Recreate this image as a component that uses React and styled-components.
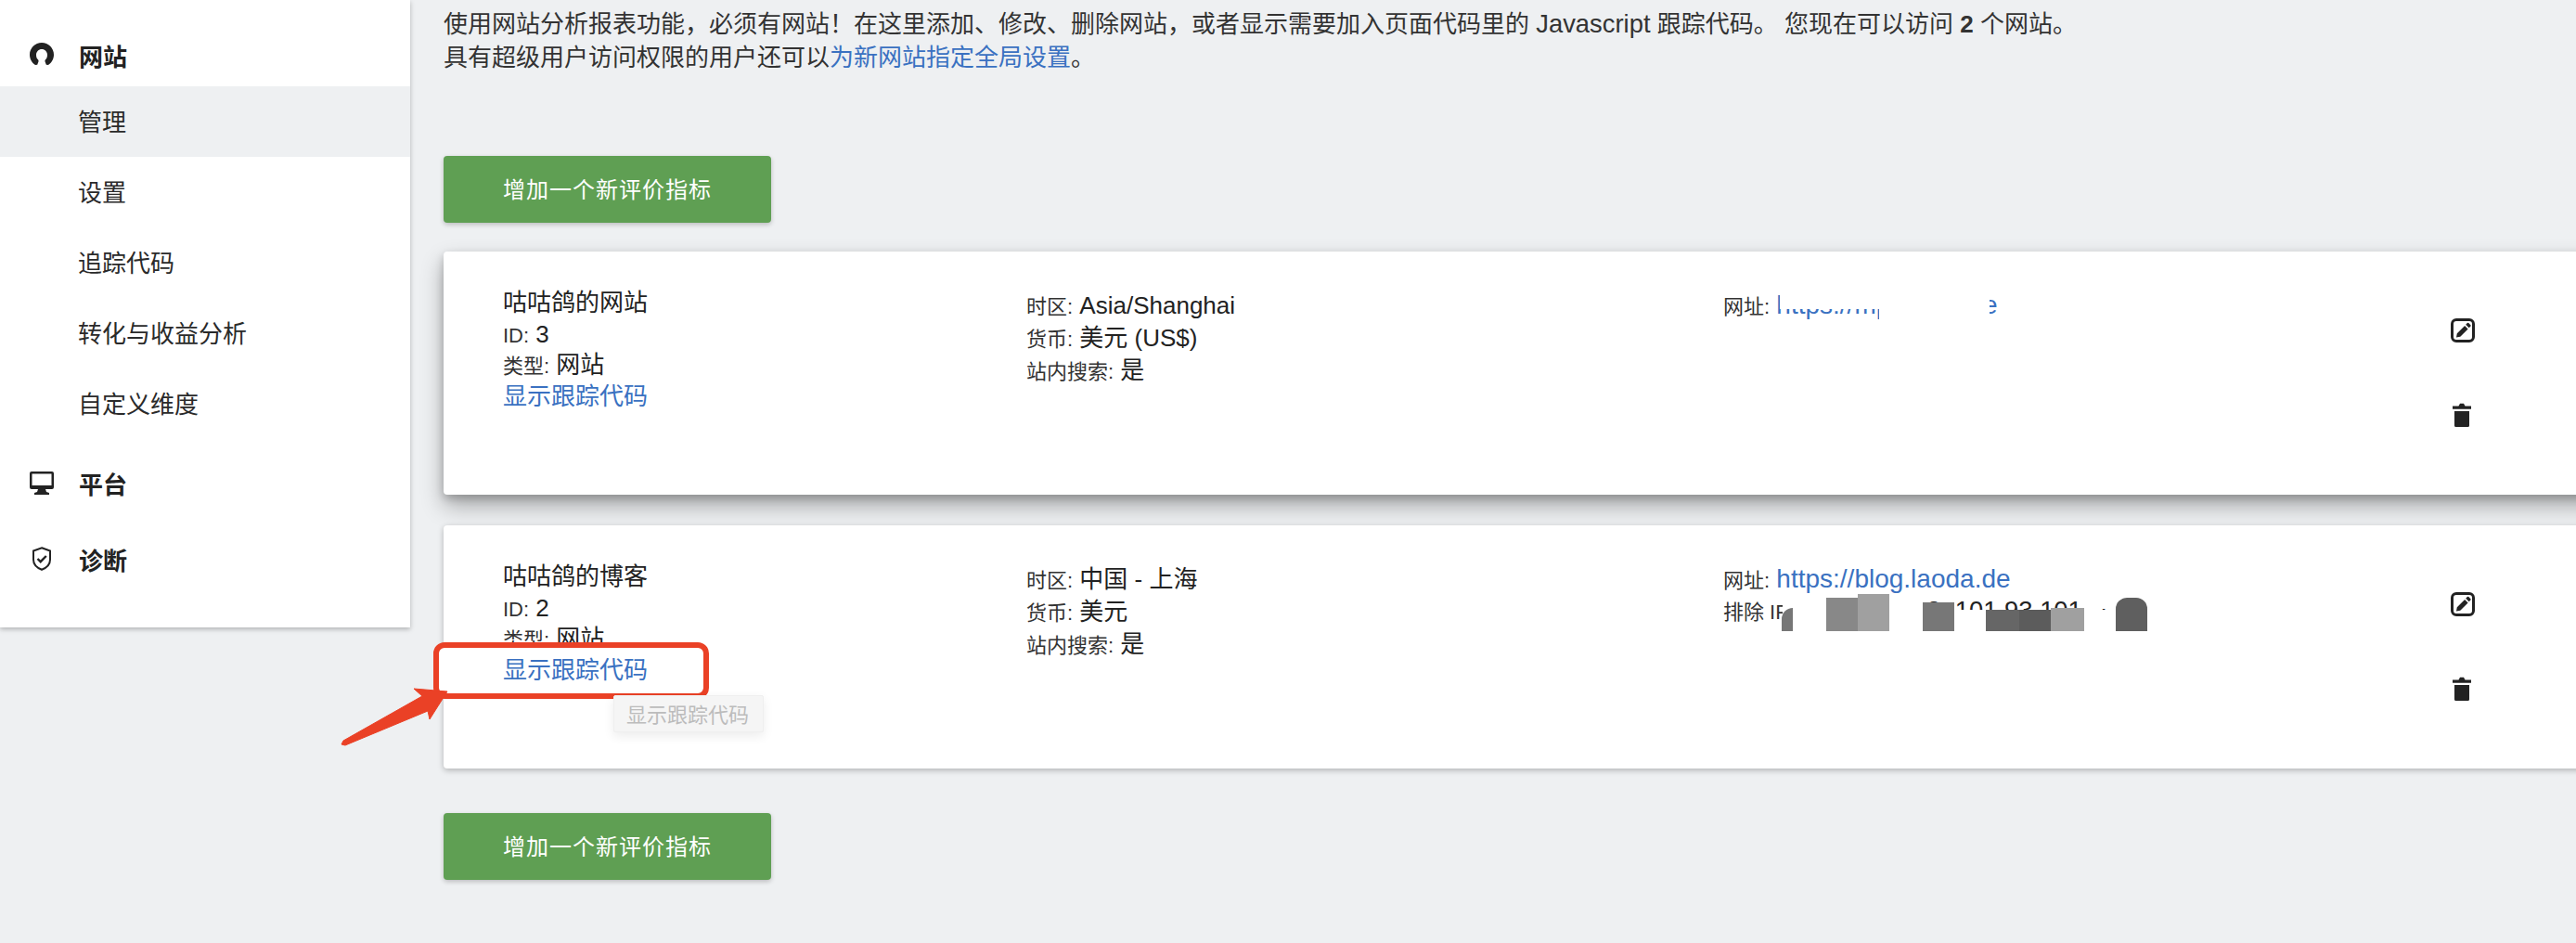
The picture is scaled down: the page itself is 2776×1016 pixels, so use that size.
import React from "react";
import styled, { createGlobalStyle } from "styled-components";

const Global = createGlobalStyle`
  html, body { margin: 0; padding: 0; background: #eef0f2; }
  body { font-family: "Liberation Sans", "Noto Sans CJK SC", sans-serif; color: #212121; }
  #root { width: 2776px; height: 1016px; overflow: hidden; }
`;

const Page = styled.div`
  position: relative;
  display: flex;
  align-items: flex-start;
  width: 2776px;
  height: 1016px;
  overflow: hidden;
  background: #eef0f2;
`;

const Sidebar = styled.nav`
  flex: none;
  width: 442px;
  height: 676px;
  padding-top: 22px;
  box-sizing: border-box;
  background: #fff;
  box-shadow: 0 2px 5px rgba(0, 0, 0, 0.26);
`;

const GroupHead = styled.div`
  display: flex;
  align-items: center;
  box-sizing: border-box;
  height: ${(p) => p.$h || 71}px;
  margin-top: ${(p) => p.$mt || 0}px;
  padding-top: ${(p) => p.$pt || 0}px;
  font-size: 26px;
  font-weight: 600;
  color: #222;
`;

const IconSlot = styled.span`
  display: flex;
  justify-content: center;
  width: 26px;
  margin: 0 27px 0 32px;
  color: #222;
`;

const NavItem = styled.div`
  display: flex;
  align-items: center;
  box-sizing: border-box;
  height: 76px;
  padding: 0 0 3px 84px;
  font-size: 26px;
  color: #2a2a2a;
  background: ${(p) => (p.$active ? "#eef0f2" : "transparent")};
`;

const Main = styled.main`
  flex: none;
  width: 2334px;
  padding: 9px 0 0 36px;
  box-sizing: border-box;
`;

const Intro = styled.p`
  margin: 0;
  font-size: 26px;
  line-height: 35.5px;
  color: #333;
  white-space: nowrap;
  b { font-weight: 700; }
`;

const Latin = styled.span`
  font-size: 27.4px;
  line-height: 1;
`;

const Link = styled.a`
  color: #3a71c1;
  text-decoration: none;
`;

const UrlLink = styled(Link)`
  font-size: 28px;
  line-height: 1;
`;

const AddButton = styled.div`
  display: flex;
  align-items: center;
  width: 353px;
  height: 72px;
  padding: 0 0 3px 64px;
  box-sizing: border-box;
  margin-top: ${(p) => p.$mt}px;
  border-radius: 4px;
  background: #5f9f53;
  color: #fff;
  font-size: 24px;
  letter-spacing: 1px;
  box-shadow: 0 2px 5px rgba(0, 0, 0, 0.22);
`;

const Card = styled.section`
  display: grid;
  grid-template-columns: 564px 751px 784px 60px;
  width: 2400px;
  height: 262px;
  padding: 40px 0 0 64px;
  box-sizing: border-box;
  margin-top: ${(p) => p.$mt}px;
  border-radius: 4px;
  background: #fff;
  box-shadow: ${(p) =>
    p.$raised
      ? "0 12px 24px rgba(0,0,0,0.3), 0 4px 10px rgba(0,0,0,0.2)"
      : "0 2px 6px rgba(0,0,0,0.26)"};
`;

const Column = styled.div`
  font-size: 26px;
  padding-top: ${(p) => p.$pt || 0}px;
  color: #222;
  white-space: nowrap;
`;

const Line = styled.div`
  height: ${(p) => p.$h || 33.5}px;
  line-height: 30px;
`;

const Label = styled.span`
  font-size: 22px;
  color: #333;
`;

const Actions = styled.div`
  display: flex;
  flex-direction: column;
  align-items: flex-start;
  gap: 65px;
  padding-top: 32px;
  color: #222;
`;

const Tooltip = styled.div`
  position: absolute;
  left: 661px;
  top: 749px;
  z-index: 3;
  width: 162px;
  height: 40px;
  padding: 0 2px 3px 0;
  display: flex;
  align-items: center;
  justify-content: center;
  font-size: 22px;
  color: #bcbcbc;
  background: #f5f5f5;
  border: 1px solid #efefef;
  box-sizing: border-box;
  border-radius: 2px;
  box-shadow: 0 4px 12px rgba(0, 0, 0, 0.08);
`;

const Highlight = styled.div`
  position: absolute;
  left: 467px;
  top: 692px;
  z-index: 2;
  width: 297px;
  height: 61px;
  box-sizing: border-box;
  border: 6px solid #ea4126;
  border-radius: 12px;
  background: #fff;
`;

const LinkOverlay = styled.div`
  position: absolute;
  left: 542px;
  top: 705px;
  z-index: 3;
  font-size: 26px;
  line-height: 34px;
`;

const ArrowSvg = styled.svg`
  position: absolute;
  left: 360px;
  top: 735px;
  z-index: 4;
`;

const Patch = styled.div`
  position: absolute;
  z-index: 2;
  left: ${(p) => p.$x}px;
  top: ${(p) => p.$y}px;
  width: ${(p) => p.$w}px;
  height: ${(p) => p.$h}px;
  background: ${(p) => p.$c};
  border-radius: ${(p) => p.$r || "0"};
`;

const WebsiteIcon = () => (
  <svg width="26" height="26" viewBox="0 0 26 26">
    <path
      fill="currentColor"
      d="M13 0C5.800 0 0 5.800 0 13c0 4.600 2.400 8.700 6 11l2.200-.2 1.300-3.600c.2-1-.1-1.700-1-2.500C7.300 16.500 7 14.800 7 13c0-3.300 2.700-6 6-6s6 2.700 6 6c0 1.800-.3 3.500-1.500 4.700-.9.8-1.200 1.500-1 2.500l1.300 3.600 2.200.2c3.600-2.300 6-6.400 6-11C26 5.800 20.200 0 13 0z"
    />
  </svg>
);

const MonitorIcon = () => (
  <svg width="26" height="25" viewBox="0 0 26 25">
    <path
      fill="currentColor"
      d="M2 0h22a2 2 0 0 1 2 2v15a2 2 0 0 1-2 2h-7l1 3 3 1v2H5v-2l3-1 1-3H2a2 2 0 0 1-2-2V2a2 2 0 0 1 2-2zm.5 2.500V15h21V2.500z"
    />
  </svg>
);

const ShieldIcon = () => (
  <svg width="20" height="26" viewBox="0 0 20 26" fill="none" stroke="currentColor" strokeWidth="2">
    <path d="M10 1.200 19 4.500V14c0 5-4 8.800-9 10.800C5 22.800 1 19 1 14V4.500z" />
    <path d="M5.500 13l3.200 3.200L14.800 10" strokeWidth="2.400" />
  </svg>
);

const EditIcon = () => (
  <svg width="26" height="26" viewBox="0 0 26 26" style={{ display: "block" }}>
    <rect x="1.500" y="1.500" width="23" height="23" rx="4.500" fill="none" stroke="currentColor" strokeWidth="3" />
    <path fill="currentColor" d="M6 20.500l.8-4.300 8.300-8.300 3.500 3.500-8.300 8.300zM16.200 6.800l1.700-1.700a1 1 0 0 1 1.400 0l2.100 2.100a1 1 0 0 1 0 1.400l-1.700 1.700z" />
  </svg>
);

const TrashIcon = () => (
  <svg width="26" height="26" viewBox="0 0 26 26" style={{ display: "block" }}>
    <path fill="currentColor" d="M2 3.500h6.500L10 .8h4l1.500 2.700H22v3.200H2zM4 9h16v15.500a1.500 1.500 0 0 1-1.500 1.500h-13A1.500 1.500 0 0 1 4 24.500z" />
  </svg>
);

const sites = [
  { name: "咕咕鸽的网站", id: 3, tz: "Asia/Shanghai", cur: "美元 (US$)", url: "https://mp.laoda.de", raised: true, mt: 31 },
  { name: "咕咕鸽的博客", id: 2, tz: "中国 - 上海", cur: "美元", url: "https://blog.laoda.de", ip: "10.43.7, 112. 101.93.101. 1", mt: 33 },
];

const SiteCard = ({ s }) => (
  <Card $raised={s.raised} $mt={s.mt}>
    <Column>
      <Line>{s.name}</Line>
      <Line><Label>ID:</Label> {s.id}</Line>
      <Line><Label>类型:</Label> 网站</Line>
      <Line><Link>显示跟踪代码</Link></Line>
    </Column>
    <Column $pt={3}>
      <Line $h={35}><Label>时区:</Label> {s.tz}</Line>
      <Line $h={35}><Label>货币:</Label> {s.cur}</Line>
      <Line $h={35}><Label>站内搜索:</Label> 是</Line>
    </Column>
    <Column $pt={3}>
      <Line><Label>网址:</Label> <UrlLink>{s.url}</UrlLink></Line>
      {s.ip && <Line><Label>排除 IP:</Label> <Latin>{s.ip}</Latin></Line>}
    </Column>
    <Actions>
      <EditIcon />
      <TrashIcon />
    </Actions>
  </Card>
);

const patches = [
  { $x: 1918, $y: 296, $w: 226, $h: 37, $c: "#fff" },
  { $x: 2025, $y: 333, $w: 119, $h: 16, $c: "#fff" },
  { $x: 1921, $y: 644, $w: 151, $h: 38, $c: "#fff" },
  { $x: 2106, $y: 657, $w: 176, $h: 25, $c: "#fff" },
  { $x: 2246, $y: 644, $w: 34, $h: 12, $c: "#fff" },
  { $x: 1920, $y: 655, $w: 12, $h: 25, $c: "#777", $r: "12px 0 0 0" },
  { $x: 1968, $y: 644, $w: 34, $h: 36, $c: "#888" },
  { $x: 2002, $y: 640, $w: 34, $h: 40, $c: "#a0a0a0" },
  { $x: 2072, $y: 649, $w: 34, $h: 31, $c: "#777" },
  { $x: 2140, $y: 657, $w: 36, $h: 23, $c: "#666" },
  { $x: 2176, $y: 657, $w: 34, $h: 23, $c: "#5c5c5c" },
  { $x: 2210, $y: 655, $w: 36, $h: 25, $c: "#a0a0a0" },
  { $x: 2280, $y: 644, $w: 34, $h: 36, $c: "#5f5f5f", $r: "12px 12px 0 0" },
];

export default function App() {
  return (
    <>
      <Global />
      <Page>
        <Sidebar>
          <GroupHead $pt={3}>
            <IconSlot><WebsiteIcon /></IconSlot>网站
          </GroupHead>
          <NavItem $active>管理</NavItem>
          <NavItem>设置</NavItem>
          <NavItem>追踪代码</NavItem>
          <NavItem>转化与收益分析</NavItem>
          <NavItem>自定义维度</NavItem>
          <GroupHead $h={82} $mt={6}>
            <IconSlot><MonitorIcon /></IconSlot>平台
          </GroupHead>
          <GroupHead $h={82}>
            <IconSlot><ShieldIcon /></IconSlot>诊断
          </GroupHead>
        </Sidebar>
        <Main>
          <Intro>使用网站分析报表功能，必须有网站！在这里添加、修改、删除网站，或者显示需要加入页面代码里的 <Latin>Javascript</Latin> 跟踪代码。 您现在可以访问 <b>2</b> 个网站。</Intro>
          <Intro>具有超级用户访问权限的用户还可以<Link>为新网站指定全局设置</Link>。</Intro>
          <AddButton $mt={88}>增加一个新评价指标</AddButton>
          {sites.map((s) => (
            <SiteCard key={s.id} s={s} />
          ))}
          <AddButton $mt={48}>增加一个新评价指标</AddButton>
        </Main>
        {patches.map((p, i) => (
          <Patch key={i} {...p} />
        ))}
        <Highlight />
        <LinkOverlay><Link>显示跟踪代码</Link></LinkOverlay>
        <Tooltip>显示跟踪代码</Tooltip>
        <ArrowSvg width="130" height="75" viewBox="0 0 130 75">
          <path
            fill="#ea4126"
            stroke="#ea4126"
            strokeLinejoin="round"
            strokeWidth="1"
            d="M10 63 L8 67 L12 68 L101 31 L103 40 L122 10 L86 7 L95 15 Z"
          />
        </ArrowSvg>
      </Page>
    </>
  );
}
